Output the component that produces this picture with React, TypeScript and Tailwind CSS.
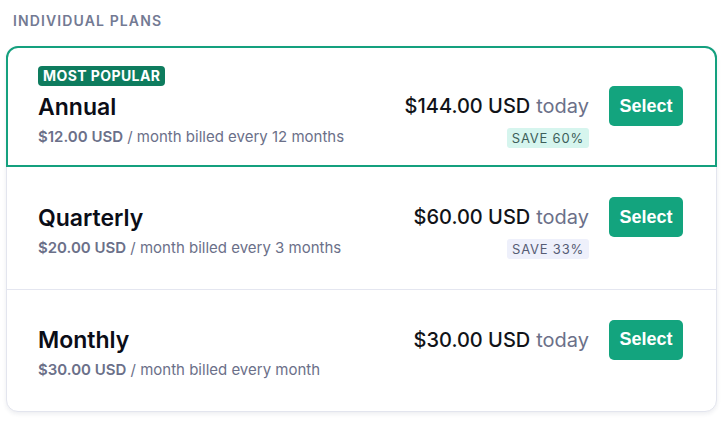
type Plan = {
  name: string;
  perMonth: string;
  billed: string;
  total: string;
  save?: string;
  popular?: boolean;
  saveTone?: "green" | "gray";
};

const plans: Plan[] = [
  {
    name: "Annual",
    perMonth: "$12.00 USD",
    billed: "month billed every 12 months",
    total: "$144.00 USD",
    save: "SAVE 60%",
    saveTone: "green",
    popular: true,
  },
  {
    name: "Quarterly",
    perMonth: "$20.00 USD",
    billed: "month billed every 3 months",
    total: "$60.00 USD",
    save: "SAVE 33%",
    saveTone: "gray",
  },
  {
    name: "Monthly",
    perMonth: "$30.00 USD",
    billed: "month billed every month",
    total: "$30.00 USD",
  },
];

const PlanBody = ({ plan }: { plan: Plan }) => (
  <div className="flex items-center justify-between">
    <div className="flex flex-col pt-[5px]">
      <h3 className="text-[23px] leading-7 font-semibold text-[#0b0d17]">{plan.name}</h3>
      <p className="text-[15px] leading-5 text-[#6b7089] mt-[6px]">
        <span className="font-semibold">{plan.perMonth}</span> / {plan.billed}
      </p>
    </div>
    <div className="flex items-start gap-5">
      <div className="flex flex-col items-end">
        <div className="h-10 flex items-center text-[20px] font-medium text-[#111318]">
          {plan.total}
          <span className="ml-[6px] font-normal text-[#6b7089]">today</span>
        </div>
        <span
          className={
            plan.saveTone === "green"
              ? "mt-0.5 h-5 px-[5px] rounded-[3px] bg-[#d6f5ee] text-[13px] leading-5 tracking-[0.06em] text-[#3d5e5a]"
              : plan.saveTone === "gray"
              ? "mt-0.5 h-5 px-[5px] rounded-[3px] bg-[#eef0fb] text-[13px] leading-5 tracking-[0.06em] text-[#565c74]"
              : "mt-0.5 h-5 invisible"
          }
        >
          {plan.save ?? "SAVE"}
        </span>
      </div>
      <button className="w-[74px] h-10 rounded-[5px] bg-[#13a47e] text-white text-[18px] font-bold font-['Liberation_Sans',Arial,sans-serif]">
        Select
      </button>
    </div>
  </div>
);

export default function App() {
  return (
    <div className="w-[722px] h-[423px] bg-white font-['Inter','Noto_Sans',sans-serif] pl-[6px] pr-[5px]">
      <h2 className="pl-[7px] pt-[13px] h-[46px] text-[14px] leading-4 font-semibold tracking-[0.08em] text-[#737a93]">
        INDIVIDUAL PLANS
      </h2>
      <div className="rounded-xl border border-[#e3e5ee] bg-white shadow-[0_2px_4px_rgba(30,40,80,0.08)]">
        {plans.map((plan, i) =>
          plan.popular ? (
            <div
              key={plan.name}
              className="-mx-px -mt-px h-[121px] border-2 border-[#14a07e] rounded-t-xl pl-[30px] pr-[32px] pt-[18px]"
            >
              <div className="flex">
                <span className="h-5 px-[5px] rounded-[4px] bg-[#0e7c5e] text-white text-[14px] leading-5 font-bold tracking-[0.03em]">
                  MOST POPULAR
                </span>
              </div>
              <PlanBody plan={plan} />
            </div>
          ) : (
            <div
              key={plan.name}
              className={
                i < plans.length - 1
                  ? "h-[123px] border-b border-[#e4e6f0] pl-[31px] pr-[33px] flex flex-col justify-center"
                  : "h-[121px] pl-[31px] pr-[33px] flex flex-col justify-center"
              }
            >
              <PlanBody plan={plan} />
            </div>
          )
        )}
      </div>
    </div>
  );
}
